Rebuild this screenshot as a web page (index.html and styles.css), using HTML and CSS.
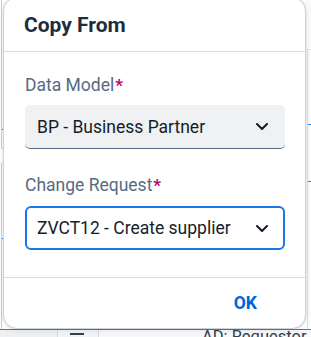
FILE: index.html
```html
<!DOCTYPE html>
<html lang="en">
<head>
<meta charset="utf-8">
<title>Copy From</title>
<link rel="stylesheet" href="styles.css">
</head>
<body>
<div class="backdrop">
  <div class="bg-left">
    <div class="lt-card lt-card-a">
      <div class="lt-head"></div>
      <div class="lt-row"></div>
    </div>
    <div class="lt-card lt-card-b">
      <div class="lt-row-b"></div>
    </div>
  </div>
  <div class="bg-mid"></div>
  <div class="bg-right">
    <div class="rt-head"></div>
    <div class="rt-body">
      <div class="rt-row rt-row-1"></div>
      <div class="rt-row rt-row-2"></div>
    </div>
  </div>
  <div class="bg-bottom">
    <div class="bb-cell bb-first"></div>
    <div class="bb-cell bb-icon"><span class="dash"></span></div>
    <div class="bb-cell bb-text">AD: Requestor</div>
  </div>
</div>

<div class="dialog" role="dialog" aria-labelledby="dlg-title">
  <header class="dlg-header">
    <h1 class="dlg-title" id="dlg-title">Copy From</h1>
  </header>
  <div class="dlg-content">
    <div class="field">
      <label class="field-label">Data Model<span class="req">*</span></label>
      <div class="select select-filled">
        <span class="select-value">BP - Business Partner</span>
        <svg class="chevron" width="12" height="7" viewBox="0 0 12 7" aria-hidden="true"><path d="M1 1 L6 6 L11 1" fill="none" stroke="#131e29" stroke-width="2" stroke-linecap="round" stroke-linejoin="round"/></svg>
      </div>
    </div>
    <div class="field">
      <label class="field-label">Change Request<span class="req">*</span></label>
      <div class="select select-focus">
        <span class="select-value">ZVCT12 - Create supplier</span>
        <svg class="chevron" width="12" height="7" viewBox="0 0 12 7" aria-hidden="true"><path d="M1 1 L6 6 L11 1" fill="none" stroke="#131e29" stroke-width="2" stroke-linecap="round" stroke-linejoin="round"/></svg>
      </div>
    </div>
  </div>
  <footer class="dlg-footer">
    <button class="btn-ok" type="button">OK</button>
  </footer>
</div>
</body>
</html>
```

FILE: styles.css
```css
* { box-sizing: border-box; }

html, body {
  margin: 0;
  padding: 0;
  width: 311px;
  height: 337px;
  overflow: hidden;
}

body {
  position: relative;
  background: #ffffff;
  font-family: Roboto, "Liberation Sans", Arial, sans-serif;
}

/* ---------- background page ---------- */
.backdrop {
  display: grid;
  grid-template-columns: 3px 303px 5px;
  grid-template-rows: 329px 8px;
  width: 311px;
  height: 337px;
}

.bg-left {
  display: flex;
  flex-direction: column;
  padding-left: 1px;
}

.lt-card {
  border-left: 1px solid #c9cfd5;
  background: #ffffff;
}

.lt-card-a {
  height: 149px;
  border-bottom: 1px solid #c9cfd5;
  border-bottom-left-radius: 6px;
}

.lt-head {
  height: 50px;
  border-bottom: 1px solid #e1e4e7;
}

.lt-row {
  height: 80px;
  border-bottom: 1px solid #2e7fe0;
}

.lt-card-b {
  margin-top: 13px;
  flex: 1;
  border-top-left-radius: 6px;
}

.lt-row-b {
  height: 77px;
  border-bottom: 1px solid #2e7fe0;
}

.bg-right {
  display: flex;
  flex-direction: column;
  background: #fbfbfc;
}

.rt-head {
  height: 50px;
  border-bottom: 1px solid #e1e4e7;
}

.rt-body {
  flex: 1;
  margin-left: 1px;
  border-left: 1px solid #dfe2e5;
}

.rt-row {
  border-bottom: 1px solid #2e7fe0;
}

.rt-row-1 { height: 75px; }
.rt-row-2 { height: 57px; }

.bg-bottom {
  grid-column: 1 / -1;
  display: flex;
  border-top: 1px solid #2e7fe0;
  background: #f7f8f9;
}

.bb-cell { height: 100%; }

.bb-first {
  width: 58px;
  background: #eef0f2;
  border-right: 1px solid #d5d9dd;
}

.bb-icon {
  width: 41px;
  padding: 3px 0 0 12px;
  background: #f3f4f6;
  border-right: 1px solid #d5d9dd;
}

.dash {
  display: block;
  width: 14px;
  height: 1.5px;
  background: #32404f;
}

.bb-text {
  flex: 1;
  padding: 2px 0 0 103px;
  font-size: 16.5px;
  line-height: 10px;
  color: #32404f;
  white-space: nowrap;
}

/* ---------- dialog ---------- */
.dialog {
  position: absolute;
  left: 3px;
  top: -3px;
  width: 303px;
  height: 332px;
  display: flex;
  flex-direction: column;
  background: #ffffff;
  border: 1px solid #cdd3d9;
  border-radius: 14px;
  box-shadow: 0 0 2px rgba(34, 53, 72, 0.18), 0 2px 6px rgba(34, 53, 72, 0.08);
}

.dlg-header {
  height: 54px;
  flex: none;
  display: flex;
  align-items: center;
  padding: 1.5px 20px 0 20px;
  border-bottom: 1px solid #d9dde1;
}

.dlg-title {
  margin: 0;
  font-size: 21px;
  font-weight: 700;
  color: #1d2d3e;
  line-height: 24px;
}

.dlg-content {
  flex: none;
  display: flex;
  flex-direction: column;
  gap: 25px;
  padding: 22px 20px 27px 21px;
}

.field {
  display: flex;
  flex-direction: column;
}

.field-label {
  display: block;
  height: 22px;
  line-height: 22px;
  margin-bottom: 9px;
  font-size: 17.5px;
  color: #556b82;
  white-space: nowrap;
}

.req {
  margin-left: 1px;
  color: #ba066c;
  font-weight: 700;
  font-size: 17px;
}

.select {
  height: 44px;
  width: 260px;
  display: flex;
  align-items: center;
  justify-content: space-between;
  font-size: 17.5px;
  color: #131e29;
  white-space: nowrap;
}

.select-filled {
  padding: 0 17px 0 12px;
  background: #eff1f2;
  border-bottom: 1px solid #556b82;
  border-radius: 5px;
}

.select-focus {
  margin-top: 1px;
  padding: 0 15px 0 10px;
  background: #ffffff;
  border: 2px solid #1b76eb;
  border-radius: 6px;
}

.select-value {
  line-height: 22px;
}

.chevron {
  display: block;
  flex: none;
}

.dlg-footer {
  flex: 1;
  display: flex;
  align-items: center;
  justify-content: flex-end;
  padding: 0 36px 0 20px;
  border-top: 1px solid #d9dde1;
}

.btn-ok {
  margin: 0;
  padding: 0 12px;
  height: 36px;
  border: none;
  background: transparent;
  font-family: Roboto, "Liberation Sans", Arial, sans-serif;
  font-size: 17.5px;
  font-weight: 700;
  color: #0064d9;
  cursor: pointer;
}
```
